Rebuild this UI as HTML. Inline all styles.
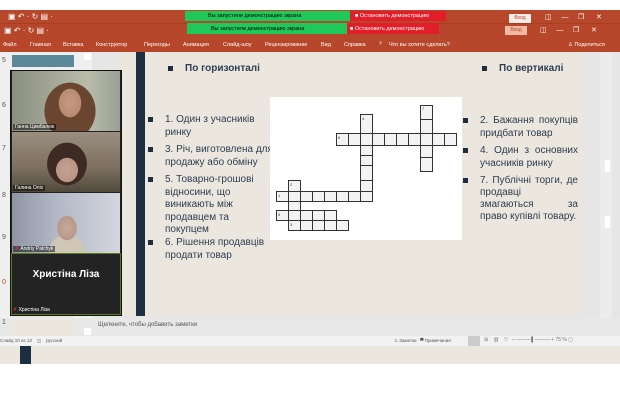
<!DOCTYPE html>
<html><head><meta charset="utf-8"><style>
*{margin:0;padding:0;box-sizing:border-box}
body{width:620px;height:420px;background:#fff;position:relative;overflow:hidden;font-family:"Liberation Sans",sans-serif}
.a{position:absolute}
.t{font-size:5px;color:#fff;white-space:nowrap}
.r{position:absolute;top:42px;font-size:5.5px;color:#fff;white-space:nowrap}
.li{position:absolute;font-size:10px;color:#2e3d50;line-height:12.5px}
.li:before{content:"";position:absolute;left:-17px;top:3px;width:5px;height:5px;background:#1f2d3d}
.nb{position:absolute;font-size:10px;color:#2e3d50;line-height:12.5px;white-space:nowrap}
</style></head><body>
<div class="a" style="left:0;top:10px;width:620px;height:42px;background:#b7472a"></div>
<div class="a" style="left:0;top:23px;width:620px;height:1px;background:#a8401f"></div>
<div class="a t" style="left:8px;top:12px;font-size:8px">▣ ↶ · ↻ ▤ ·</div>
<div class="a t" style="left:4px;top:26px;font-size:8px">▣ ↶ · ↻ ▤ ·</div>
<div class="a" style="left:185px;top:11px;width:165px;height:10px;background:#1ec95a"></div>
<div class="a t" style="left:208px;top:13px;color:#000;font-size:5.5px">Вы запустили демонстрацию экрана</div>
<div class="a" style="left:350px;top:11px;width:96px;height:10px;background:#e21e2a"></div>
<div class="a t" style="left:355px;top:13px;font-size:5.5px">■ Остановить демонстрацию</div>
<div class="a" style="left:187px;top:23px;width:160px;height:11px;background:#1ec95a"></div>
<div class="a t" style="left:211px;top:26px;color:#000;font-size:5.5px">Вы запустили демонстрацию экрана</div>
<div class="a" style="left:347px;top:23px;width:92px;height:11px;background:#e21e2a"></div>
<div class="a t" style="left:350px;top:26px;font-size:5.5px">■ Остановить демонстрацию</div>
<div class="a" style="left:509px;top:14px;width:22px;height:9px;background:#f7ece8;font-size:5px;color:#b7472a;text-align:center;line-height:9px">Вход</div>
<div class="a" style="left:505px;top:26px;width:22px;height:9px;background:#f2b9a6;font-size:5px;color:#b7472a;text-align:center;line-height:9px">Вход</div>
<div class="a t" style="left:545px;top:13px;font-size:7px">◫&nbsp;&nbsp;&nbsp;&nbsp; —&nbsp;&nbsp;&nbsp;&nbsp; ❐&nbsp;&nbsp;&nbsp;&nbsp;&nbsp; ✕</div>
<div class="a t" style="left:540px;top:26px;font-size:7px">◫&nbsp;&nbsp;&nbsp;&nbsp; —&nbsp;&nbsp;&nbsp;&nbsp; ❐&nbsp;&nbsp;&nbsp;&nbsp;&nbsp; ✕</div>
<div class="r" style="left:3px">Файл</div>
<div class="r" style="left:30px">Главная</div>
<div class="r" style="left:63px">Вставка</div>
<div class="r" style="left:96px">Конструктор</div>
<div class="r" style="left:144px">Переходы</div>
<div class="r" style="left:183px">Анимация</div>
<div class="r" style="left:223px">Слайд-шоу</div>
<div class="r" style="left:265px">Рецензирование</div>
<div class="r" style="left:321px">Вид</div>
<div class="r" style="left:344px">Справка</div>
<div class="r" style="left:378px;top:40px;font-size:7px">♀</div>
<div class="r" style="left:389px">Что вы хотите сделать?</div>
<div class="r" style="left:568px">♙ Поделиться</div>
<div class="a" style="left:0;top:52px;width:620px;height:266px;background:#e6e6e6"></div>
<div class="a" style="left:0;top:52px;width:92px;height:266px;background:#efefef"></div>
<div class="a" style="left:12px;top:55px;width:62px;height:12px;background:#5a8a99"></div>
<div class="a" style="left:12px;top:314px;width:62px;height:6px;background:#ebe7df"></div>
<div class="a" style="left:2px;top:57px;font-size:7px;color:#555">5</div>
<div class="a" style="left:2px;top:102px;font-size:7px;color:#555">6</div>
<div class="a" style="left:2px;top:145px;font-size:7px;color:#555">7</div>
<div class="a" style="left:2px;top:192px;font-size:7px;color:#555">8</div>
<div class="a" style="left:2px;top:234px;font-size:7px;color:#555">9</div>
<div class="a" style="left:2px;top:279px;font-size:7px;color:#d04a20">0</div>
<div class="a" style="left:84px;top:53px;width:7px;height:7px;background:#fff"></div>
<div class="a" style="left:118px;top:52px;width:465px;height:264px;background:#ebe7df"></div>
<div class="a" style="left:136px;top:52px;width:9px;height:264px;background:#1c2f42"></div>
<div class="a" style="left:600px;top:52px;width:12px;height:266px;background:#ececec"></div>
<div class="a" style="left:605px;top:160px;width:5px;height:12px;background:#fff"></div>
<div class="a" style="left:605px;top:216px;width:5px;height:12px;background:#fff"></div>
<div class="li" style="left:185px;top:63px;font-weight:bold;font-size:10px">По горизонталі</div>
<div class="li" style="left:499px;top:63px;font-weight:bold;font-size:10px">По вертикалі</div>
<div class="li" style="left:165px;top:114px;width:106px">1. Один з учасників ринку</div>
<div class="li" style="left:165px;top:144px;width:110px">3. Річ, виготовлена для продажу або обміну</div>
<div class="li" style="left:165px;top:174px;width:106px">5. Товарно-грошові відносини, що виникають між продавцем та покупцем</div>
<div class="li" style="left:165px;top:237px;width:106px">6. Рішення продавців продати товар</div>
<div class="li" style="left:480px;top:115px;width:98px;text-align:justify">2. Бажання покупців придбати товар</div>
<div class="li" style="left:480px;top:145px;width:98px;text-align:justify">4. Один з основних учасників ринку</div>
<div class="li" style="left:480px;top:175px;width:98px;text-align:justify;text-align-last:justify">7. Публічні торги, де</div>
<div class="nb" style="left:480px;top:187px">продавці</div>
<div class="nb" style="left:480px;top:199px;width:98px;display:flex;justify-content:space-between"><span>змагаються</span><span>за</span></div>
<div class="nb" style="left:480px;top:211px">право купівлі товару.</div>
<svg class="a" style="left:270px;top:97px" width="192" height="143" viewBox="270 97 192 143">
<rect x="270" y="97" width="192" height="143" fill="#fff"/>
<g fill="#f3f3f3" stroke="#333" stroke-width="1">
<rect x="420.5" y="105.5" width="12" height="14"/><rect x="420.5" y="119.5" width="12" height="14"/><rect x="420.5" y="145.5" width="12" height="12"/><rect x="420.5" y="157.5" width="12" height="14"/>
<rect x="360.5" y="114.5" width="12" height="19"/><rect x="360.5" y="145.5" width="12" height="10"/><rect x="360.5" y="155.5" width="12" height="10"/><rect x="360.5" y="165.5" width="12" height="15"/><rect x="360.5" y="180.5" width="12" height="11"/>
<rect x="336.5" y="133.5" width="12" height="12"/><rect x="348.5" y="133.5" width="12" height="12"/><rect x="360.5" y="133.5" width="12" height="12"/><rect x="372.5" y="133.5" width="12" height="12"/><rect x="384.5" y="133.5" width="12" height="12"/><rect x="396.5" y="133.5" width="12" height="12"/><rect x="408.5" y="133.5" width="12" height="12"/><rect x="420.5" y="133.5" width="12" height="12"/><rect x="432.5" y="133.5" width="12" height="12"/><rect x="444.5" y="133.5" width="12" height="12"/>
<rect x="288.5" y="180.5" width="12" height="11"/><rect x="288.5" y="201.5" width="12" height="9"/>
<rect x="276.5" y="191.5" width="12" height="10"/><rect x="288.5" y="191.5" width="12" height="10"/><rect x="300.5" y="191.5" width="12" height="10"/><rect x="312.5" y="191.5" width="12" height="10"/><rect x="324.5" y="191.5" width="12" height="10"/><rect x="336.5" y="191.5" width="12" height="10"/><rect x="348.5" y="191.5" width="12" height="10"/><rect x="360.5" y="191.5" width="12" height="10"/>
<rect x="276.5" y="210.5" width="12" height="10"/><rect x="288.5" y="210.5" width="12" height="10"/><rect x="300.5" y="210.5" width="12" height="10"/><rect x="312.5" y="210.5" width="12" height="10"/><rect x="324.5" y="210.5" width="12" height="10"/>
<rect x="288.5" y="220.5" width="12" height="10"/><rect x="300.5" y="220.5" width="12" height="10"/><rect x="312.5" y="220.5" width="12" height="10"/><rect x="324.5" y="220.5" width="12" height="10"/><rect x="336.5" y="220.5" width="12" height="10"/>
</g>
<g font-size="4" fill="#333" font-family="Liberation Sans"><text x="422" y="110">7</text><text x="362" y="120">4</text><text x="338" y="139">6</text><text x="290" y="186">2</text><text x="278" y="197">1</text><text x="278" y="216">5</text><text x="290" y="226">3</text></g>
</svg>
<div class="a" style="left:10px;top:70px;width:112px;height:246px;background:#222;border:1px solid #111"></div>
<div class="a" style="left:12px;top:71px;width:108px;height:60px;background:radial-gradient(ellipse 22px 28px at 58px 32px,#c99a82 0,#b88a72 50%,transparent 52%),radial-gradient(ellipse 36px 40px at 58px 40px,#6a4530 0,#6a4530 70%,transparent 72%),linear-gradient(90deg,#8b8f80,#b9bca9 70%,#9aa096)"></div>
<div class="a" style="left:12px;top:132px;width:108px;height:60px;background:radial-gradient(ellipse 18px 20px at 55px 38px,#c4a290 0,#b89585 60%,transparent 62%),radial-gradient(ellipse 28px 30px at 55px 32px,#3d2a22 0,#3d2a22 70%,transparent 72%),linear-gradient(180deg,#9a8e80,#7d7060 60%,#4f4a3c)"></div>
<div class="a" style="left:12px;top:193px;width:108px;height:60px;background:radial-gradient(ellipse 16px 20px at 55px 35px,#c8a898 0,#b89888 60%,transparent 62%),radial-gradient(ellipse 30px 30px at 55px 60px,#d0c8b8 0,#cfc5b5 60%,transparent 62%),linear-gradient(90deg,#8f95a3,#b2b7c6 40%,#d3d6de)"></div>
<div class="a" style="left:11px;top:253px;width:110px;height:62px;background:#232323;border:1px solid #5a7a1e"></div>
<div class="a" style="left:0;top:269px;width:132px;text-align:center;font-size:10px;font-weight:bold;color:#fff">Христіна Ліза</div>
<div class="a t" style="left:13px;top:124px;background:rgba(0,0,0,.5);padding:0 2px;font-size:5px">Ганна Цимбалюк</div>
<div class="a t" style="left:13px;top:185px;background:rgba(0,0,0,.5);padding:0 2px;font-size:5px">Галина Оліх</div>
<div class="a t" style="left:13px;top:246px;background:rgba(0,0,0,.5);padding:0 2px;font-size:5px"><span style="color:#e33">✗</span> Andriy Palchyk</div>
<div class="a t" style="left:13px;top:307px;font-size:5px"><span style="color:#e33">✗</span> Христіна Ліза</div>
<div class="a" style="left:0;top:318px;width:620px;height:18px;background:#e8e8e8"></div>
<div class="a" style="left:12px;top:320px;width:62px;height:16px;background:#ebe7df"></div>
<div class="a" style="left:2px;top:319px;font-size:7px;color:#555">1</div>
<div class="a" style="left:84px;top:328px;width:7px;height:7px;background:#fff"></div>
<div class="a" style="left:98px;top:322px;font-size:6px;color:#555">Щелкните, чтобы добавить заметки</div>
<div class="a" style="left:0;top:336px;width:620px;height:10px;background:#f2f2f2"></div>
<div class="a" style="left:0;top:338px;font-size:4.5px;color:#555;white-space:nowrap">Слайд 10 из 13 &nbsp;&nbsp; ◫ &nbsp;&nbsp; русский</div>
<div class="a" style="left:394px;top:338px;font-size:4.5px;color:#555;white-space:nowrap">♙ Заметки &nbsp; ▀ Примечания</div>
<div class="a" style="left:468px;top:336px;width:12px;height:10px;background:#ccc"></div>
<div class="a" style="left:484px;top:337px;font-size:5px;color:#777;white-space:nowrap">⊞ &nbsp;&nbsp; ▥ &nbsp;&nbsp; ▽ &nbsp; – ———▌——— + 75 % ▢</div>
<div class="a" style="left:0;top:346px;width:622px;height:18px;background:#ebe7df"></div>
<div class="a" style="left:20px;top:346px;width:11px;height:18px;background:#1c2f42"></div>
</body></html>
